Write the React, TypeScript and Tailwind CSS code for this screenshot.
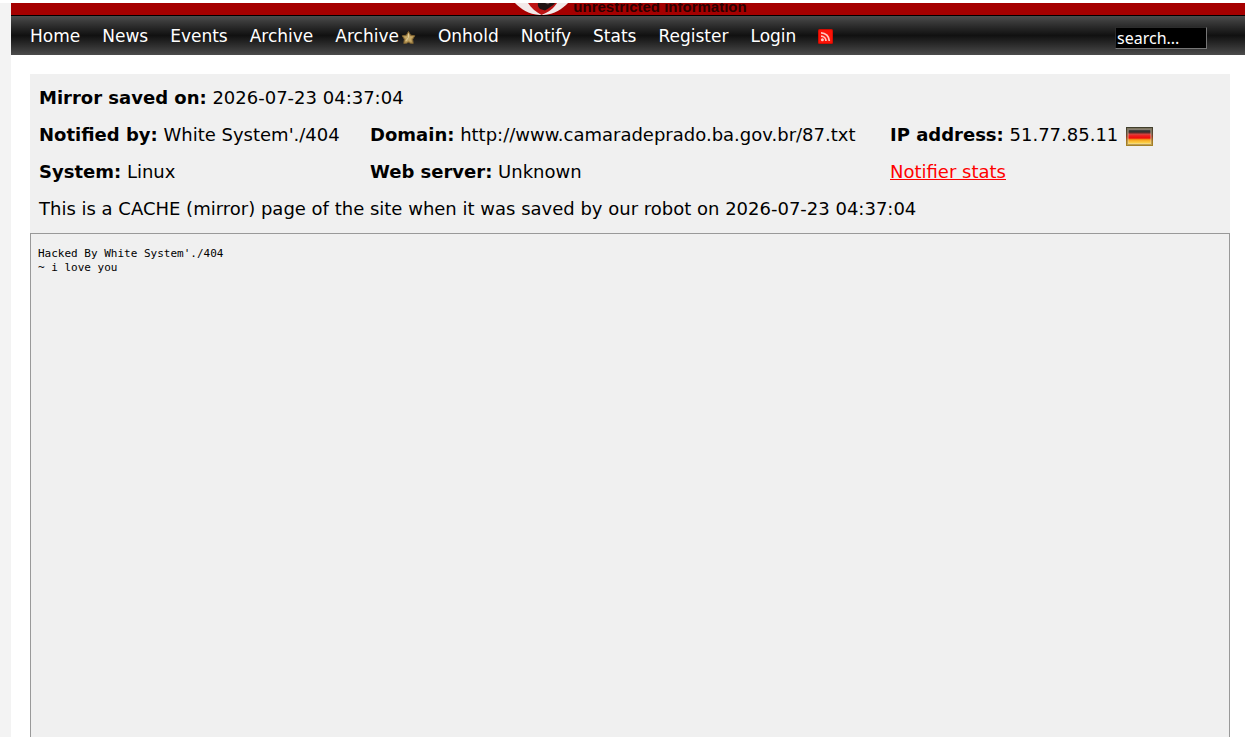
import React, { useState } from "react";

const NAV_LINKS = [
  { label: "Home" },
  { label: "News" },
  { label: "Events" },
  { label: "Archive" },
  { label: "Archive", star: true },
  { label: "Onhold" },
  { label: "Notify" },
  { label: "Stats" },
  { label: "Register" },
  { label: "Login" },
];

function StarIcon() {
  return (
    <svg className="mt-1" width="15" height="15" viewBox="0 0 15 15" aria-label="special">
      <path
        d="M7.5 1.5 9.6 5.2 13.8 5.8 11.6 9.2 12.2 13.4 9.4 13.2 7.5 12.2 5.6 13.2 2.8 13.4 3.4 9.2 1.2 5.8 5.4 5.2Z"
        fill="#b39352"
        stroke="#7d6231"
        strokeWidth="1"
        strokeLinejoin="round"
      />
      <path d="M7.500 3 9 6.300 12 6.800 9.900 9 10.500 12 7.500 10.500 4.500 12 5.100 9 3 6.800 6 6.300Z" fill="#c6a968" />
      <path d="M7.500 3.500V7.500L4.800 11" fill="none" stroke="#e0cb98" strokeWidth="1" />
    </svg>
  );
}

function RssIcon() {
  return (
    <svg width="15" height="15" viewBox="0 0 15 15">
      <rect width="15" height="15" rx="1.5" fill="#d30c02" />
      <rect x="1" y="1" width="13" height="13" rx="1" fill="#fb1307" />
      <circle cx="4.4" cy="10.7" r="1.5" fill="#ffc9c2" />
      <path
        d="M3 7.1a5 5 0 0 1 5 5M3 3.8a8.300 8.300 0 0 1 8.300 8.300"
        fill="none"
        stroke="#ffc4bc"
        strokeWidth="1.8"
      />
    </svg>
  );
}

function GermanFlag() {
  return (
    <svg className="mt-[3px]" width="27" height="19" viewBox="0 0 27 19" role="img" aria-label="Germany">
      <defs>
        <linearGradient id="flag" x1="0" y1="0" x2="0" y2="1">
          <stop offset="0" stopColor="#5a5450" />
          <stop offset=".2" stopColor="#2e2a2a" />
          <stop offset=".36" stopColor="#d8403c" />
          <stop offset=".45" stopColor="#ee2020" />
          <stop offset=".6" stopColor="#f00b0b" />
          <stop offset=".72" stopColor="#f6a51b" />
          <stop offset="1" stopColor="#ffe15a" />
        </linearGradient>
        <linearGradient id="flagEdge" x1="0" y1="0" x2="0" y2="1">
          <stop offset="0" stopColor="#3f3e2c" />
          <stop offset=".35" stopColor="#5c4a34" />
          <stop offset=".5" stopColor="#8e3b24" />
          <stop offset=".75" stopColor="#a57b20" />
          <stop offset="1" stopColor="#a68428" />
        </linearGradient>
      </defs>
      <rect width="27" height="19" fill="url(#flagEdge)" />
      <rect x="2" y="2" width="23" height="15" fill="url(#flag)" />
      <rect x="2" y="2" width="23" height="15" fill="none" stroke="#e5d8bb" strokeOpacity=".35" strokeWidth="2" />
    </svg>
  );
}

function Banner() {
  return (
    <header className="flex h-3 justify-center overflow-hidden bg-[#a50000] pl-1">
      <div className="flex items-start gap-1">
        <svg width="56" height="12" viewBox="0 0 56 12">
          <path d="M2 0C8 6 15 11.500 27 12H30C42 11.500 49 6 55 0Z" fill="#f2e9e9" />
          <path d="M15 0C18 5 23 9 28.500 12C36 9 41 5 44 0Z" fill="#bd1414" />
          <path d="M25 0H42C41 2.500 38 3 36 5L32 7.500 27 6C25 4 24.500 2 25 0Z" fill="#211414" />
          <path d="M32 0H37L35 1.500Z" fill="#6a5a5a" />
        </svg>
        <p className="-mt-1 font-['Liberation_Sans'] text-[15px] leading-4 font-bold text-[#2c0000]">
          unrestricted information
        </p>
      </div>
    </header>
  );
}

function NavBar() {
  const [search, setSearch] = useState("search...");

  return (
    <nav className="flex h-10 items-center justify-between border-t border-black bg-linear-to-b from-[#4c4c4c] via-[#111111] to-[#4c4c4c] pr-[38px] pl-[19px]">
      <ul className="flex items-center gap-[22px] text-[17px] leading-6 text-white">
        {NAV_LINKS.map((link, index) => (
          <li key={index}>
            <a href="#" className="flex items-center gap-0.5">
              {link.label}
              {link.star && <StarIcon />}
            </a>
          </li>
        ))}
        <li>
          <a href="#" aria-label="RSS feed" className="block pt-0.5">
            <RssIcon />
          </a>
        </li>
      </ul>
      <input
        type="text"
        name="search"
        aria-label="Search"
        value={search}
        onChange={(event) => setSearch(event.target.value)}
        className="mt-1 h-[22px] w-[92px] border border-[#767676] border-t-[#2c2c2c] border-l-[#2c2c2c] bg-black px-px font-['Noto_Sans',sans-serif] text-[16px] text-white"
      />
    </nav>
  );
}

function MirrorInfo() {
  return (
    <div className="bg-[#f0f0f0] px-[9px] pt-[5px] pb-[6px] text-[18px] leading-[37px] text-black">
      <p>
        <b>Mirror saved on:</b> 2026-07-23 04:37:04
      </p>
      <div className="grid grid-cols-[331px_520px_1fr] whitespace-nowrap">
        <p>
          <b>Notified by:</b> White System'./404
        </p>
        <p>
          <b>Domain:</b> http://www.camaradeprado.ba.gov.br/87.txt
        </p>
        <p className="flex items-center gap-2">
          <span>
            <b>IP address:</b> 51.77.85.11
          </span>
          <GermanFlag />
        </p>
        <p>
          <b>System:</b> Linux
        </p>
        <p>
          <b>Web server:</b> Unknown
        </p>
        <p>
          <a href="#" className="text-[#ff0000] underline">
            Notifier stats
          </a>
        </p>
      </div>
      <p>This is a CACHE (mirror) page of the site when it was saved by our robot on 2026-07-23 04:37:04</p>
    </div>
  );
}

function App() {
  return (
    <div className="flex min-h-screen flex-col bg-white pt-[3px] font-[Verdana,'DejaVu_Sans',sans-serif]">
      <div className="flex flex-1 flex-col border-l-[11px] border-[#f3f3f3]">
        <Banner />
        <NavBar />
        <main className="flex flex-1 flex-col pt-[19px] pr-[15px] pl-[19px]">
          <MirrorInfo />
          <section className="flex-1 border border-b-0 border-[#999999] bg-[#f0f0f0] px-[7px] py-[13px]">
            <pre className="font-['DejaVu_Sans_Mono',monospace] text-[11px] leading-[14px] text-black">
              {"Hacked By White System'./404\n~ i love you"}
            </pre>
          </section>
        </main>
      </div>
    </div>
  );
}

export default App;
